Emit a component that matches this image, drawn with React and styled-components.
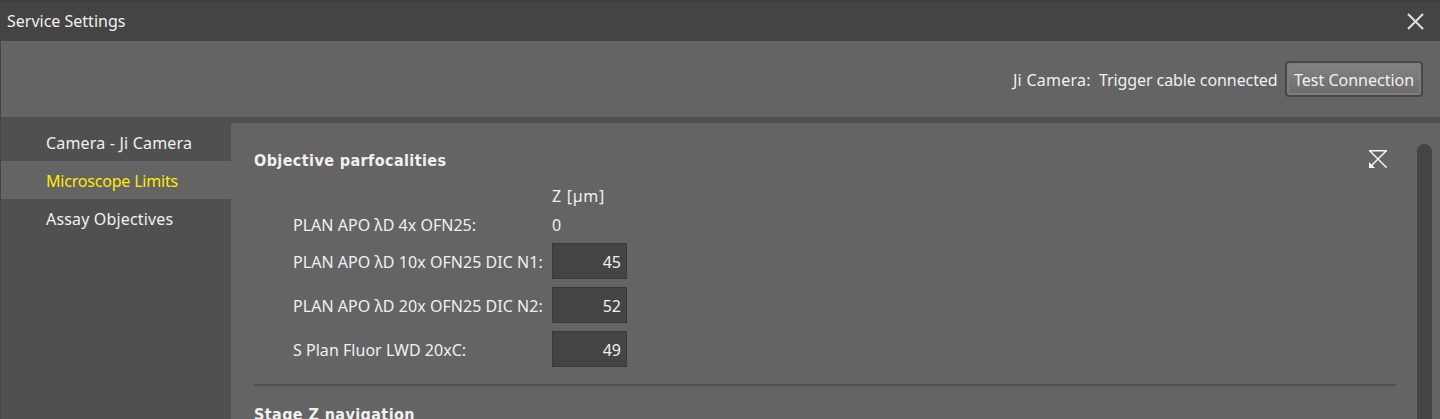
import React from "react";
import styled, { createGlobalStyle } from "styled-components";

const GlobalStyle = createGlobalStyle`
  * { box-sizing: border-box; }
  body { margin: 0; overflow: hidden; background: #646464; }
`;

const Window = styled.div`
  display: flex;
  flex-direction: column;
  width: 1440px;
  height: 419px;
  overflow: hidden;
  background: #505050;
  color: #f0f0f0;
  font: 16px/20px "Noto Sans", sans-serif;
  white-space: pre;
`;

const Text = styled.span`
  letter-spacing: ${(p) => p.$track || 0}px;
`;

const Heading = styled.span`
  font: 700 16px/20px "DejaVu Sans Condensed", "DejaVu Sans", sans-serif;
  font-stretch: condensed;
  letter-spacing: 0.4px;
`;

const TitleBar = styled.header`
  display: flex;
  flex: none;
  align-items: center;
  justify-content: space-between;
  height: 41px;
  padding: 0 15px 0 7px;
  border-top: 2px solid #3c3c3c;
  background: #444444;

  > span { padding-bottom: 2px; }
`;

const CloseButton = styled.button`
  display: flex;
  padding: 0;
  border: 0;
  background: none;
`;

const Body = styled.div`
  display: flex;
  flex-direction: column;
  flex: 1;
  min-height: 0;
  border-left: 1px solid #444444;
`;

const StatusBar = styled.div`
  display: flex;
  flex: none;
  align-items: center;
  justify-content: flex-end;
  height: 76px;
  padding: 0 17px 0 0;
  background: #646464;
`;

const StatusText = styled.span`
  width: ${(p) => p.$width}px;
  padding-top: 2px;
  letter-spacing: ${(p) => p.$track || 0}px;
`;

const Button = styled.button`
  width: 138px;
  height: 36px;
  padding: 2px 0 0 7px;
  border: 2px solid #484848;
  border-radius: 4px;
  background: linear-gradient(#848484, #6c6c6c);
  box-shadow: inset 0 0 0 2px #7e7e7e, inset 0 2px 0 #8a8a8a;
  color: inherit;
  font: inherit;
  text-align: left;
  white-space: nowrap;
`;

const Main = styled.div`
  display: flex;
  flex: 1;
  min-height: 0;
  padding-top: 6px;
`;

const Sidebar = styled.nav`
  flex: none;
  width: 230px;
`;

const NavItem = styled.div`
  height: 38px;
  padding-left: 45px;
  line-height: 41px;
  background: ${(p) => (p.$active ? "#646464" : "transparent")};
  color: ${(p) => (p.$active ? "#ffeb00" : "#f0f0f0")};
`;

const Content = styled.main`
  display: flex;
  flex: 1;
  min-width: 0;
  padding-left: 23px;
  background: #646464;
`;

const Sections = styled.div`
  width: 1142px;
`;

const Section = styled.section`
  height: 263px;
  border-bottom: 2px solid #505050;
`;

const SectionHead = styled.div`
  display: flex;
  justify-content: space-between;
  height: 47px;
  padding: 27px 9px 0 0;

  > span { padding-top: 1px; }
`;

const Grid = styled.div`
  display: grid;
  grid-template-columns: 259px 75px;
  grid-template-rows: 29px 29px 44px 44px 44px;
  padding: 11px 0 0 39px;
  align-items: center;
`;

const FieldLabel = styled(Text)`
  padding-top: ${(p) => (p.$fixed ? 0 : 2)}px;
`;

const Field = styled.input`
  width: 75px;
  height: 36px;
  padding: 2px 5px 0 0;
  border: 1px solid #3a3a3a;
  background: #444444;
  color: #f0f0f0;
  font: inherit;
  text-align: right;
  outline: none;
`;

const NextHeading = styled.div`
  padding-top: 18px;
`;

const Scrollbar = styled.div`
  width: 15px;
  margin: 21px 0 -20px 21px;
  border-radius: 8px;
  background: #444444;
`;

const navigation = [
  { label: "Camera - Ji Camera", track: 0.19 },
  { label: "Microscope Limits", track: -0.2 },
  { label: "Assay Objectives", track: 0.16 },
];
const activeLabel = "Microscope Limits";

const objectives = [
  { name: "PLAN APO λD 4x OFN25:", track: 0.02, value: 0, fixed: true },
  { name: "PLAN APO λD 10x OFN25 DIC N1:", track: 0.04, value: 45 },
  { name: "PLAN APO λD 20x OFN25 DIC N2:", track: 0.04, value: 52 },
  { name: "S Plan Fluor LWD 20xC:", track: 0.03, value: 49 },
];

const CloseIcon = () => (
  <svg width="19" height="19" viewBox="0 0 19 19" fill="none" stroke="#dcdcdc" strokeWidth="2.2">
    <path d="M2 2 17 17M17 2 2 17" />
  </svg>
);

const ParfocalIcon = () => (
  <svg width="18" height="18" viewBox="0 0 18 18" fill="none" stroke="#f4f4f4" strokeWidth="1.5">
    <path d="M0 .75H18M.7 .7 17.7 17.7M17.3 .7 2 16" />
    <path d="M0 12V18H6Z" fill="#f4f4f4" stroke="none" />
  </svg>
);

export default function App() {
  return (
    <Window>
      <GlobalStyle />
      <TitleBar>
        <Text>Service Settings</Text>
        <CloseButton aria-label="Close"><CloseIcon /></CloseButton>
      </TitleBar>
      <Body>
        <StatusBar>
          <StatusText $width={86} $track={0.25}>Ji Camera:</StatusText>
          <StatusText $width={186} $track={-0.09}>Trigger cable connected</StatusText>
          <Button><Text>Test Connection</Text></Button>
        </StatusBar>
        <Main>
          <Sidebar>
            {navigation.map((item) => (
              <NavItem key={item.label} $active={item.label === activeLabel}>
                <Text $track={item.track}>{item.label}</Text>
              </NavItem>
            ))}
          </Sidebar>
          <Content>
            <Sections>
              <Section>
                <SectionHead>
                  <Heading>Objective parfocalities</Heading>
                  <ParfocalIcon />
                </SectionHead>
                <Grid>
                  <span />
                  <Text $track={0.7}>Z [µm]</Text>
                  {objectives.map((o) => (
                    <React.Fragment key={o.name}>
                      <FieldLabel $track={o.track} $fixed={o.fixed}>{o.name}</FieldLabel>
                      {o.fixed ? <Text>{o.value}</Text> : <Field defaultValue={o.value} />}
                    </React.Fragment>
                  ))}
                </Grid>
              </Section>
              <NextHeading><Heading>Stage Z navigation</Heading></NextHeading>
            </Sections>
            <Scrollbar />
          </Content>
        </Main>
      </Body>
    </Window>
  );
}
